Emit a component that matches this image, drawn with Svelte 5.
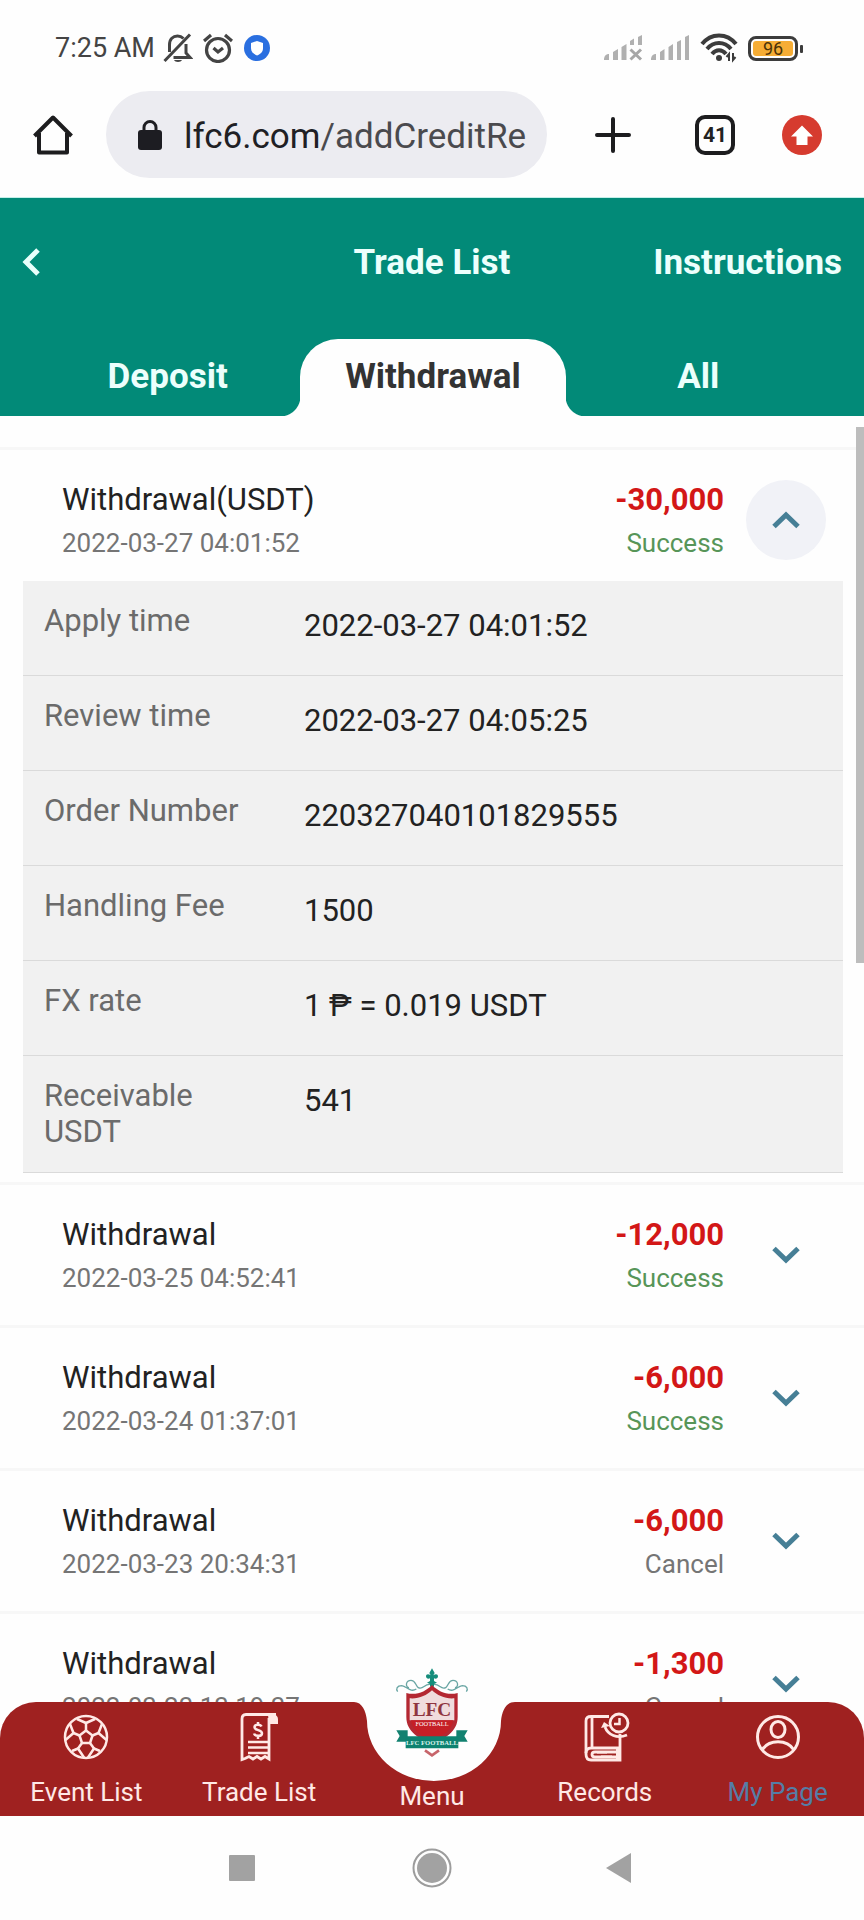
<script>
  const tabs = ['Deposit', 'Withdrawal', 'All'];
  let active = $state('Withdrawal');

  let records = $state([
    {
      title: 'Withdrawal(USDT)',
      time: '2022-03-27 04:01:52',
      amount: '-30,000',
      status: 'Success',
      open: true,
      details: [
        ['Apply time', '2022-03-27 04:01:52'],
        ['Review time', '2022-03-27 04:05:25'],
        ['Order Number', '220327040101829555'],
        ['Handling Fee', '1500'],
        ['FX rate', '1 ₱ = 0.019 USDT'],
        ['Receivable USDT', '541']
      ]
    },
    { title: 'Withdrawal', time: '2022-03-25 04:52:41', amount: '-12,000', status: 'Success', open: false, details: [] },
    { title: 'Withdrawal', time: '2022-03-24 01:37:01', amount: '-6,000', status: 'Success', open: false, details: [] },
    { title: 'Withdrawal', time: '2022-03-23 20:34:31', amount: '-6,000', status: 'Cancel', open: false, details: [] },
    { title: 'Withdrawal', time: '2022-03-23 13:19:37', amount: '-1,300', status: 'Cancel', open: false, details: [] }
  ]);
</script>

<div class="screen">
  <div class="status">
    <span class="clock">7:25 AM</span>
    <svg width="30" height="30" viewBox="0 0 30 30" fill="none" stroke="#444" stroke-width="3">
      <path d="M1.500 28 27 1.500M6.500 19V12C6.500 6 10 3 14.500 3c2.500 0 4.500 1 6 2.500M23 11v9l4 4.500H10.500" />
      <path d="M11 27h8c-1 2.500-7 2.500-8 0z" fill="#444" stroke="none" />
    </svg>
    <svg width="30" height="30" viewBox="0 0 30 30" fill="none" stroke="#444" stroke-width="3.200">
      <circle cx="15" cy="17" r="11.500" />
      <path d="M1 8 8 2M29 8l-7-6M10.500 15l4.500 4 5-4" />
    </svg>
    <svg width="28" height="28" viewBox="0 0 28 28">
      <circle cx="14" cy="14" r="13" fill="#2a6fe0" />
      <path d="M14 7l6 2v5c0 4-2.500 6-6 7.500C10.500 20 8 18 8 14V9z" fill="#fff" />
    </svg>
    <span class="spacer"></span>
    <span class="signals">
      <svg width="39" height="26" viewBox="0 0 39 26" fill="#b0b0b0">
        <path d="M0 25c0-4 2-6 5-6v6zM9 25V17l5-3v11zM17.500 25V12l5-3v16zM26 10V6l4-2.500V10zM34 10V2l4-2v10z" />
        <path d="M26.500 14.500 37 24.500M37 14.500 26.500 24.500" stroke="#a6a6a6" stroke-width="3" />
      </svg>
      <svg width="39" height="26" viewBox="0 0 39 26" fill="#b0b0b0">
        <path d="M0 25c0-4 2-6 5-6v6zM9 25V17l4.500-3v11zM17.500 25V12l4.500-3v16zM26 25V7l4-2v20zM34 25V2l4-2v25z" />
      </svg>
    </span>
    <svg width="38" height="30" viewBox="0 0 38 30" fill="none" stroke="#3c3c3c" stroke-width="4">
      <path d="M2 11C11-.500 27-.500 36 11M7 16c6.500-8 17.500-8 24 0M12 21c4-5 10-5 14 0" />
      <circle cx="19" cy="25" r="3" fill="#3c3c3c" stroke="none" />
      <path d="M29 28v-7l-2.500 3M33 20v7l2.500-3" stroke-width="2" />
    </svg>
    <span class="battery"><span class="charge">96</span></span>
  </div>

  <div class="browser">
    <button class="home" aria-label="Home">
      <svg width="40" height="42" viewBox="0 0 40 42" fill="none" stroke="#1d1d1f" stroke-width="4" stroke-linejoin="round">
        <path d="M1.500 22 20 3.500 38.500 22M6 19v19.500h28V19" />
      </svg>
    </button>
    <div class="address">
      <svg width="24" height="32" viewBox="0 0 24 32">
        <path d="M6 13V8.500a6 6 0 0 1 12 0V13" fill="none" stroke="#1d1d22" stroke-width="3" />
        <rect x="0" y="11" width="24" height="20" rx="3" fill="#1d1d22" />
      </svg>
      <span class="url"><span class="host">lfc6.com</span>/addCreditRe</span>
    </div>
    <button class="tool" aria-label="New tab">
      <svg width="36" height="36" viewBox="0 0 36 36" stroke="#1d1d1f" stroke-width="4" stroke-linecap="round">
        <path d="M18 2v32M2 18h32" />
      </svg>
    </button>
    <button class="tool"><span class="count">41</span></button>
    <button class="tool update" aria-label="Update">
      <svg width="40" height="40" viewBox="0 0 40 40">
        <circle cx="20" cy="20" r="20" fill="#d63b2f" />
        <path d="M20 10.500 31 21.500H25.500V30h-11V21.500H9z" fill="#fff" />
      </svg>
    </button>
  </div>

  <header>
    <div class="bar">
      <button class="back" aria-label="Back">
        <svg width="18" height="28" viewBox="0 0 18 28" fill="none" stroke="#e8fffb" stroke-width="5">
          <path d="M16 2 4 14l12 12" />
        </svg>
      </button>
      <h1>Trade List</h1>
      <a class="help" href="#instructions">Instructions</a>
    </div>
    <div class="tabs">
      {#each tabs as tab}
        <button class="tab" class:active={active === tab} onclick={() => (active = tab)}>{tab}</button>
      {/each}
    </div>
  </header>

  <main>
    <div class="list">
      {#each records as item}
        <section class="item">
          <div class="head">
            <div class="info">
              <span class="title">{item.title}</span>
              <span class="sub">{item.time}</span>
            </div>
            <div class="info sum">
              <span class="amount">{item.amount}</span>
              <span class="sub" class:success={item.status === 'Success'}>{item.status}</span>
            </div>
            <button class="toggle" class:open={item.open} aria-label="Details" onclick={() => (item.open = !item.open)}>
              <svg width="28" height="18" viewBox="0 0 28 18" fill="none" stroke="#467f96" stroke-width="5">
                <path d={item.open ? 'M2 15.500 14 4l12 11.500' : 'M2 2.500 14 14 26 2.500'} />
              </svg>
            </button>
          </div>
          {#if item.open && item.details.length}
            <dl>
              {#each item.details as [label, value]}
                <div class="row">
                  <dt>{label}</dt>
                  <dd>{value}</dd>
                </div>
              {/each}
            </dl>
          {/if}
        </section>
      {/each}
    </div>
    <div class="thumb"></div>

    <nav>
      <div class="backdrop">
        <span class="side left"></span>
        <svg width="172" height="114" viewBox="0 0 172 114">
          <path d="M0 0H8C16 0 20 9 21 19A67 60 0 0 0 155 19C156 9 160 0 169 0H172V114H0z" fill="#9f2120" />
        </svg>
        <span class="side right"></span>
      </div>
      <a href="#events">
        <svg width="50" height="50" viewBox="0 0 50 50" fill="none" stroke="#ffe9e6" stroke-width="2.500" stroke-linejoin="round">
          <circle cx="25" cy="25" r="21" />
          <path d="M25 18.500l6.500 5-2.500 7.500h-8l-2.500-7.500z" />
          <path d="M25 18.500V11M31.500 23.500l6-2.500M29 31l4 5.500M21 31l-4 5.500M18.500 23.500l-6-2.500" />
          <path d="M16 7l9 4 9-4M41 12l-3.500 9 8 7M39 39l-6-2.500-6 9M11 39l6-2.500 6 9M9 12l3.500 9-8 7" />
        </svg>
        <span>Event List</span>
      </a>
      <a href="#trades">
        <svg width="50" height="50" viewBox="0 0 50 50" fill="none" stroke="#ffe9e6" stroke-width="2.800">
          <path d="M34 6v41l-4-2.500-4 2.500-4-2.500-4 2.500-4-2.500-4 2-3 1V7c0-3 1-4.500 4-4.500h30" transform="translate(1 0)" />
          <path d="M34 3h6c3 0 4 2 4 5v4h-9z" fill="#ffe9e6" stroke="none" />
          <path d="M14 30h20M14 35.500h20M14 41h20" stroke-width="2.500" />
          <path d="M27.500 14.500c-1-2.500-7-2.500-7 .7 0 3.600 7.500 2.200 7.500 6 0 3.500-7 3.500-8 .3M24 10v3M24 23.500V27" stroke-width="2.500" />
        </svg>
        <span>Trade List</span>
      </a>
      <a class="menu" href="#menu">
        <svg width="74" height="90" viewBox="0 0 222 270">
          <g fill="none" stroke="#6aa6a4" stroke-width="4">
            <path d="M105 52C88 50 84 70 70 62c-10-8-8-22-22-22-16 0-18 20-6 22M64 66C46 78 36 58 20 56 6 56 2 66 8 74" />
            <path d="M117 52c17-2 21 18 35 10 10-8 8-22 22-22 16 0 18 20 6 22M158 66c18 12 28-8 44-10 14 0 18 10 12 18" />
          </g>
          <path d="M111 4l8 14-4 7c8-6 14-3 14 3s-6 9-12 6v8l9 5-9 4v8h-12v-8l-9-4 9-5v-8c-6 3-12 0-12-6s6-9 14-3l-4-7z" fill="#158d7b" />
          <path d="M34 78c30 8 58-4 77-24 19 20 47 32 77 24v72c0 46-40 62-77 88-37-26-77-42-77-88z" fill="#b42832" />
          <path d="M44 94c28 2 50-8 67-24 17 16 39 26 67 24v66H44z" fill="#f0dcdd" />
          <path d="M48 160h126c-3 30-30 46-63 64-33-18-60-34-63-64z" fill="#c51f26" />
          <text x="111" y="148" text-anchor="middle" font-family="Liberation Serif, serif" font-size="58" font-weight="700" fill="#8f3540">LFC</text>
          <text x="111" y="178" text-anchor="middle" font-family="Liberation Serif, serif" font-size="19" fill="#fff">FOOTBALL</text>
          <path d="M4 190h34v34H4l10-17zM218 190h-34v34h34l-10-17z" fill="#128170" />
          <path d="M32 208h158v36H32z" fill="#0d8270" />
          <text x="111" y="233" text-anchor="middle" font-family="Liberation Serif, serif" font-size="20" font-weight="700" fill="#d8f2ec">LFC FOOTBALL</text>
          <path d="M90 250l21 15 21-15" fill="none" stroke="#c7656b" stroke-width="8" />
        </svg>
        <span>Menu</span>
      </a>
      <a href="#records">
        <svg width="50" height="50" viewBox="0 0 50 50" fill="none" stroke="#ffe9e6" stroke-width="2.800">
          <path d="M29 4.500H11C7.500 4.500 6 6 6 9v33c0 4 2 6 5 6h29V22" />
          <path d="M12 5v30M6 41c0-4 2-5 5-5h28M38 40H15c-4 0-4 5 0 5h23" />
          <path d="M17 40.500h10M21 44.500h11" stroke-width="2" />
          <path d="M36 35h5v13h-5z" fill="#ffe9e6" stroke="none" />
          <circle cx="39" cy="11" r="9" />
          <path d="M39.500 6v6H34" stroke-width="2.500" />
          <path d="M25 15c3 8 12 12 22 8" />
          <path d="M21 16l3-6 6 4z" fill="#ffe9e6" stroke="none" />
        </svg>
        <span>Records</span>
      </a>
      <a class="current" href="#me">
        <svg width="50" height="50" viewBox="0 0 50 50" fill="none" stroke="#ffe9e6" stroke-width="3">
          <circle cx="25" cy="25" r="20.500" />
          <ellipse cx="25" cy="17.500" rx="7" ry="8" />
          <path d="M9 38c7-11 25-11 32 0" />
        </svg>
        <span>My Page</span>
      </a>
    </nav>
  </main>

  <footer>
    <button aria-label="Recent apps">
      <svg width="40" height="40" viewBox="0 0 40 40"><rect x="7" y="7" width="26" height="26" rx="1" fill="#a2a2a2" /></svg>
    </button>
    <button aria-label="Home screen">
      <svg width="40" height="40" viewBox="0 0 40 40">
        <circle cx="20" cy="20" r="15" fill="#a2a2a2" />
        <circle cx="20" cy="20" r="18.500" fill="none" stroke="#9c9c9c" stroke-width="2" />
      </svg>
    </button>
    <button aria-label="Go back">
      <svg width="40" height="40" viewBox="0 0 40 40"><path d="M4 20 29 5v30z" fill="#a2a2a2" /></svg>
    </button>
  </footer>
</div>

<style>
  :global(body) {
    margin: 0;
    background: #fefefe;
  }
  .screen {
    display: flex;
    flex-direction: column;
    height: 100vh;
    font-family: Roboto, 'Noto Sans', sans-serif;
    color: #222;
  }
  button {
    border: 0;
    padding: 0;
    background: none;
    font: inherit;
    color: inherit;
    display: flex;
    align-items: center;
    justify-content: center;
  }
  a {
    color: inherit;
    text-decoration: none;
  }
  svg {
    display: block;
    flex: none;
  }

  .status {
    display: flex;
    align-items: center;
    gap: 10px;
    height: 86px;
    padding: 5px 66px 0 55px;
    color: #444;
  }
  .clock {
    font-size: 27px;
    margin-right: -2px;
  }
  .spacer {
    flex: 1;
  }
  .signals {
    display: flex;
    gap: 8px;
  }
  .battery {
    position: relative;
    box-sizing: border-box;
    height: 25px;
    width: 50px;
    padding: 2px;
    border: 3px solid #3c3c3c;
    border-radius: 8px;
  }
  .battery::after {
    content: '';
    position: absolute;
    right: -8px;
    top: 6px;
    width: 3px;
    height: 8px;
    border-radius: 1px;
    background: #3c3c3c;
  }
  .charge {
    display: block;
    height: 15px;
    border-radius: 3px;
    background: #f6ad35;
    color: #4a3208;
    font-size: 18px;
    line-height: 16px;
    text-align: center;
  }

  .browser {
    display: flex;
    align-items: center;
    padding: 0 26px 19px 33px;
    border-bottom: 1px solid #c4efe9;
  }
  .home {
    width: 40px;
    margin-right: 33px;
  }
  .address {
    flex: 1;
    min-width: 0;
    box-sizing: border-box;
    height: 87px;
    padding: 0 14px 0 32px;
    margin-right: 15px;
    border-radius: 44px;
    background: #ececf1;
    display: flex;
    align-items: center;
    gap: 22px;
  }
  .url {
    padding-top: 4px;
    font-size: 35px;
    color: #4a4a4e;
    white-space: nowrap;
    overflow: hidden;
  }
  .host {
    color: #202024;
  }
  .tool {
    width: 102px;
    height: 60px;
  }
  .update {
    width: 72px;
  }
  .count {
    box-sizing: border-box;
    width: 40px;
    height: 40px;
    border: 4px solid #1d1d1f;
    border-radius: 10px;
    font-size: 21px;
    font-weight: 700;
    line-height: 32px;
  }

  header {
    background: #028a78;
    color: #ecfffc;
    font-size: 35px;
    font-weight: 700;
  }
  .bar {
    display: grid;
    grid-template-columns: 1fr auto 1fr;
    align-items: center;
    height: 128px;
    padding: 0 22px;
  }
  .back {
    justify-self: start;
  }
  h1 {
    margin: 0;
    font-size: 35px;
  }
  .help {
    justify-self: end;
  }
  .tabs {
    display: grid;
    grid-template-columns: repeat(3, 1fr);
    padding: 13px 33px 0 35px;
  }
  .tab {
    position: relative;
    height: 77px;
    padding-bottom: 2px;
  }
  .tab.active {
    background: #fefefe;
    color: #333;
    border-radius: 38px 38px 0 0;
  }
  .tab.active::before,
  .tab.active::after {
    content: '';
    position: absolute;
    bottom: 0;
    width: 20px;
    height: 20px;
  }
  .tab.active::before {
    right: 100%;
    background: radial-gradient(circle at 0 0, #028a78 20px, #fefefe 21px);
  }
  .tab.active::after {
    left: 100%;
    background: radial-gradient(circle at 100% 0, #028a78 20px, #fefefe 21px);
  }

  main {
    position: relative;
    flex: 1;
    min-height: 0;
    overflow: hidden;
  }
  .list {
    padding-top: 31px;
  }
  .item {
    border-top: 3px solid #f7f7f7;
    padding-bottom: 9px;
  }
  .head {
    display: flex;
    align-items: flex-start;
    padding: 30px 38px 20px 62px;
  }
  .info {
    flex: 1;
    display: flex;
    flex-direction: column;
    gap: 5px;
    height: 81px;
  }
  .sum {
    align-items: flex-end;
    margin-right: 22px;
  }
  .title,
  .amount {
    font-size: 31px;
    line-height: 40px;
  }
  .amount {
    font-weight: 700;
    color: #d31717;
  }
  .sub {
    font-size: 26px;
    line-height: 36px;
    color: #757575;
  }
  .sub.success {
    color: #579558;
  }
  .toggle {
    width: 80px;
    height: 80px;
    border-radius: 50%;
  }
  .toggle.open {
    background: #f1f2f7;
  }

  dl {
    margin: 0 21px 0 23px;
    background: #f1f1f1;
    font-size: 31px;
    line-height: 36px;
  }
  .row {
    box-sizing: border-box;
    display: grid;
    grid-template-columns: 210px 1fr;
    column-gap: 50px;
    min-height: 95px;
    padding: 22px 21px;
    border-bottom: 1px solid #dadada;
  }
  dt {
    color: #6b6b6b;
  }
  dd {
    margin: 0;
    padding-top: 5px;
  }
  .thumb {
    position: absolute;
    right: 0;
    top: 11px;
    width: 8px;
    height: 536px;
    background: #bdbdbd;
  }

  nav {
    position: absolute;
    left: 0;
    right: 0;
    bottom: 0;
    display: grid;
    grid-template-columns: repeat(5, 1fr);
    color: #ffe9e6;
    font-size: 26px;
    line-height: 34px;
  }
  .backdrop {
    position: absolute;
    inset: 0;
    display: flex;
  }
  .side {
    flex: 1;
    background: #9f2120;
  }
  .left {
    border-radius: 36px 0 0 0;
  }
  .right {
    border-radius: 0 36px 0 0;
  }
  nav a {
    position: relative;
    display: flex;
    flex-direction: column;
    align-items: center;
    gap: 13px;
    height: 104px;
    padding-top: 10px;
  }
  nav .menu {
    box-sizing: border-box;
    height: 114px;
    padding: 0 0 3px;
    justify-content: flex-end;
    gap: 22px;
  }
  .current {
    color: #557da6;
  }

  footer {
    display: flex;
    align-items: center;
    justify-content: center;
    gap: 150px;
    height: 104px;
  }
</style>
